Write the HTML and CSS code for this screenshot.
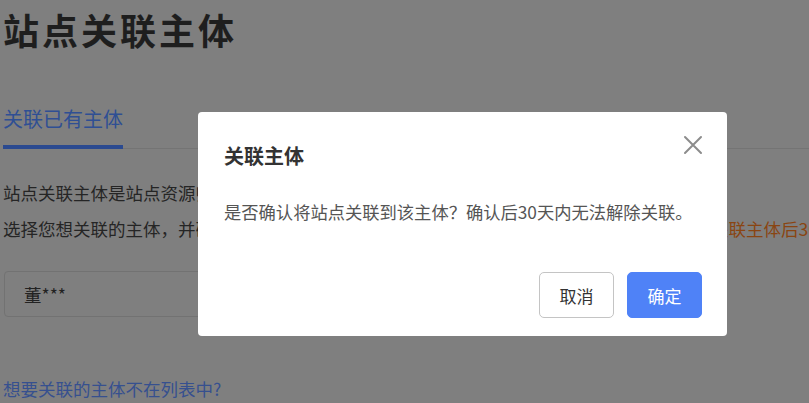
FILE: index.html
```html
<!DOCTYPE html>
<html lang="zh-CN">
<head>
<meta charset="utf-8">
<title>站点关联主体</title>
<link rel="stylesheet" href="styles.css">
</head>
<body>
<div class="page">
  <h1 class="title">站点关联主体</h1>
  <div class="tabs">
    <div class="tab active">关联已有主体</div>
  </div>
  <div class="desc">
    <p class="line">站点关联主体是站点资源归属与管理的重要依据。</p>
    <p class="line">选择您想关联的主体，并确认主体信息真实有效后点击确定按钮完成关联操作。请您注意：<span class="warn">关联主体后30天内无法解除关联。</span></p>
  </div>
  <div class="select"><span class="select-text">董***</span></div>
  <a class="link" href="#">想要关联的主体不在列表中?</a>
</div>

<div class="modal">
  <div class="modal-title">关联主体</div>
  <button class="close" aria-label="关闭">
    <svg width="20" height="20" viewBox="0 0 20 20"><path d="M2 2L18 18M18 2L2 18" stroke="#8c8c8c" stroke-width="2" fill="none" stroke-linecap="round"/></svg>
  </button>
  <div class="modal-body">是否确认将站点关联到该主体？确认后30天内无法解除关联。</div>
  <div class="modal-footer">
    <button class="btn btn-cancel">取消</button>
    <button class="btn btn-ok">确定</button>
  </div>
</div>
</body>
</html>
```
FILE: styles.css
```css
html, body {
  margin: 0;
  padding: 0;
}
body {
  width: 809px;
  height: 403px;
  overflow: hidden;
  background: #7f7f7f;
  font-family: "Noto Sans CJK SC", "Noto Sans", sans-serif;
  position: relative;
}
.page {
  padding: 4px 0 0 3px;
}
.title {
  margin: 0;
  font-size: 36px;
  line-height: 50px;
  font-weight: 700;
  letter-spacing: 3px;
  color: #1e1e1e;
}
.tabs {
  margin-top: 51px;
  border-bottom: 1px solid #747474;
  display: flex;
}
.tab {
  font-size: 20px;
  line-height: 28px;
  padding-bottom: 12px;
  color: #2f4f94;
}
.tab.active {
  border-bottom: 4px solid #2b4a90;
  margin-bottom: -1px;
}
.desc {
  margin-top: 26px;
}
.line {
  margin: 0;
  font-size: 17.5px;
  line-height: 36px;
  color: #252525;
  white-space: nowrap;
  overflow: hidden;
}
.warn {
  color: #8a4512;
  margin-left: 8px;
}
.select {
  margin-top: 24px;
  margin-left: 1px;
  width: 560px;
  height: 44px;
  border: 1px solid #727272;
  border-radius: 4px;
  display: flex;
  align-items: center;
  padding-left: 19px;
}
.select-text {
  font-size: 17.5px;
  color: #222;
}
.link {
  display: block;
  margin-top: 54px;
  font-size: 17.5px;
  line-height: 36px;
  color: #36508f;
  text-decoration: none;
}
.modal {
  position: absolute;
  left: 198px;
  top: 112px;
  width: 529px;
  height: 224px;
  box-sizing: border-box;
  background: #fff;
  border-radius: 4px;
  padding: 30px 25px 18px 26px;
  display: flex;
  flex-direction: column;
}
.modal-title {
  font-size: 20px;
  line-height: 28px;
  font-weight: 700;
  color: #333;
}
.close {
  position: absolute;
  top: 23px;
  right: 24px;
  width: 20px;
  height: 20px;
  padding: 0;
  border: 0;
  background: none;
  display: flex;
}
.modal-body {
  margin-top: 28px;
  font-size: 17.3px;
  line-height: 28px;
  color: #555;
  white-space: nowrap;
}
.modal-footer {
  margin-top: auto;
  display: flex;
  justify-content: flex-end;
  gap: 13px;
}
.btn {
  width: 75px;
  height: 46px;
  border-radius: 5px;
  font-family: "Noto Sans CJK SC", "Noto Sans", sans-serif;
  font-size: 17px;
  padding: 0;
  box-sizing: border-box;
}
.btn-cancel {
  background: #fff;
  border: 1.5px solid #c4c4c4;
  color: #333;
}
.btn-ok {
  background: #4f82f7;
  border: 1px solid #4f82f7;
  color: #fff;
}
```
